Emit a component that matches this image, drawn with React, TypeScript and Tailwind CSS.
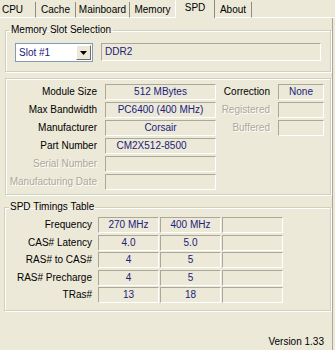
import React from 'react';

interface FieldProps {
  value?: string;
  left?: boolean;
  className?: string;
}

const Field: React.FC<FieldProps> = ({ value, left, className = '' }) => (
  <div
    className={`flex items-center border border-t-[#aca899] border-l-[#aca899] border-b-white border-r-white text-[#20207a] leading-none whitespace-nowrap ${
      left ? 'justify-start pl-[3px]' : 'justify-center'
    } ${className}`}
  >
    {value}
  </div>
);

const Label: React.FC<{ text: string; disabled?: boolean; className?: string }> = ({ text, disabled, className = '' }) => (
  <div
    className={`h-[16px] flex items-center justify-end leading-none whitespace-nowrap ${
      disabled ? 'text-[#aca899] [text-shadow:1px_1px_0_#ffffff]' : 'text-black'
    } ${className}`}
  >
    {text}
  </div>
);

const tabs = [
  { name: 'CPU', w: 'w-[36px] pr-[10px]' },
  { name: 'Cache', w: 'w-[40px]' },
  { name: 'Mainboard', w: 'w-[54px]' },
  { name: 'Memory', w: 'w-[45px]' },
  { name: 'SPD', w: 'w-[40px]', active: true },
  { name: 'About', w: 'w-[37px]' },
];

const specRows = [
  { label: 'Module Size', value: '512 MBytes' },
  { label: 'Max Bandwidth', value: 'PC6400 (400 MHz)' },
  { label: 'Manufacturer', value: 'Corsair' },
  { label: 'Part Number', value: 'CM2X512-8500', padRight: true },
  { label: 'Serial Number', disabled: true },
  { label: 'Manufacturing Date', disabled: true },
];

const sideRows = [
  { label: 'Correction', value: 'None' },
  { label: 'Registered', disabled: true },
  { label: 'Buffered', disabled: true },
];

const timings = [
  { label: 'Frequency', a: '270 MHz', b: '400 MHz' },
  { label: 'CAS# Latency', a: '4.0', b: '5.0' },
  { label: 'RAS# to CAS#', a: '4', b: '5' },
  { label: 'RAS# Precharge', a: '4', b: '5' },
  { label: 'TRas#', a: '13', b: '18' },
];

const App: React.FC = () => {
  return (
    <div className="w-[335px] h-[350px] bg-[#ece9d8] font-['Liberation_Sans',Arial,sans-serif] text-[10px] text-black overflow-hidden">
      {/* tab strip */}
      <div className="flex items-end h-[18px]">
        {tabs.map(t =>
          t.active ? (
            <div
              key={t.name}
              className={`${t.w} h-[18px] flex items-start justify-center pt-[2px] border-l border-l-white border-r border-r-[#8e8c80] leading-[12px]`}
            >
              {t.name}
            </div>
          ) : (
            <div
              key={t.name}
              className={`${t.w} h-[16px] flex items-center justify-center border-b border-b-white ${
                t.name === 'Memory' ? '' : 'border-r border-r-[#8e8c80]'
              } leading-[12px]`}
            >
              {t.name}
            </div>
          )
        )}
        <div className="flex-1 h-[16px] border-b border-b-white" />
      </div>

      <div className="w-[333px] h-[332px] border-r border-r-[#aca899] flex flex-col">
        {/* Memory Slot Selection */}
        <fieldset className="ml-[5px] mt-[6px] w-[326px] border border-[#d0d0bf] shadow-[inset_1px_1px_0_#ffffff,1px_1px_0_#ffffff] pb-[9px]">
          <legend className="ml-[3px] px-[2px] leading-[12px]">Memory Slot Selection</legend>
          <div className="flex mt-[7px] ml-[9px] gap-[8px]">
            <div className="w-[78px] h-[19px] flex items-center bg-white border border-[#7f9db9] pl-[3px] pr-[1px]">
              <span className="flex-1 text-[#20207a] leading-none">Slot #1</span>
              <div className="w-[15px] h-[15px] bg-[#ece9d8] border border-t-white border-l-white border-b-[#716f64] border-r-[#716f64] flex items-center justify-center">
                <svg width="7" height="4" viewBox="0 0 7 4">
                  <path d="M0 0h7L3.5 4z" fill="#000" />
                </svg>
              </div>
            </div>
            <Field value="DDR2" left className="w-[220px] h-[18px]" />
          </div>
        </fieldset>

        {/* module info */}
        <div className="ml-[5px] mt-[6px] w-[326px] h-[117px] border border-[#d0d0bf] shadow-[inset_1px_1px_0_#ffffff,1px_1px_0_#ffffff] flex pt-[5px]">
          <div className="flex flex-col gap-[2px]">
            {specRows.map(r => (
              <div key={r.label} className="flex gap-[8px]">
                <Label text={r.label} disabled={r.disabled} className="w-[91px]" />
                <Field value={r.value} className={r.padRight ? 'w-[111px] h-[16px] pr-[18px]' : 'w-[111px] h-[16px]'} />
              </div>
            ))}
          </div>
          <div className="flex flex-col gap-[2px]">
            {sideRows.map(r => (
              <div key={r.label} className="flex gap-[8px]">
                <Label text={r.label} disabled={r.disabled} className="w-[54px]" />
                <Field value={r.value} className="w-[46px] h-[16px]" />
              </div>
            ))}
          </div>
        </div>

        {/* SPD Timings Table */}
        <fieldset className="ml-[4px] mt-[6px] w-[327px] border border-[#d0d0bf] shadow-[inset_1px_1px_0_#ffffff,1px_1px_0_#ffffff] pt-[4px] pb-[7px]">
          <legend className="ml-[4px] px-[1px] leading-[12px]">SPD Timings Table</legend>
          <div className="flex flex-col gap-[1.5px]">
            {timings.map(r => (
              <div key={r.label} className="flex">
                <Label text={r.label} className="w-[87px] mr-[6px]" />
                <div className="flex gap-[1px]">
                  <Field value={r.a} className="w-[61px] h-[16px]" />
                  <Field value={r.b} className="w-[61px] h-[16px]" />
                  <Field value="" className="w-[61px] h-[16px]" />
                </div>
              </div>
            ))}
          </div>
        </fieldset>

        <div className="flex justify-end pr-[8px] mt-auto mb-[2px] leading-[12px]">Version 1.33</div>
      </div>
    </div>
  );
};

export default App;
